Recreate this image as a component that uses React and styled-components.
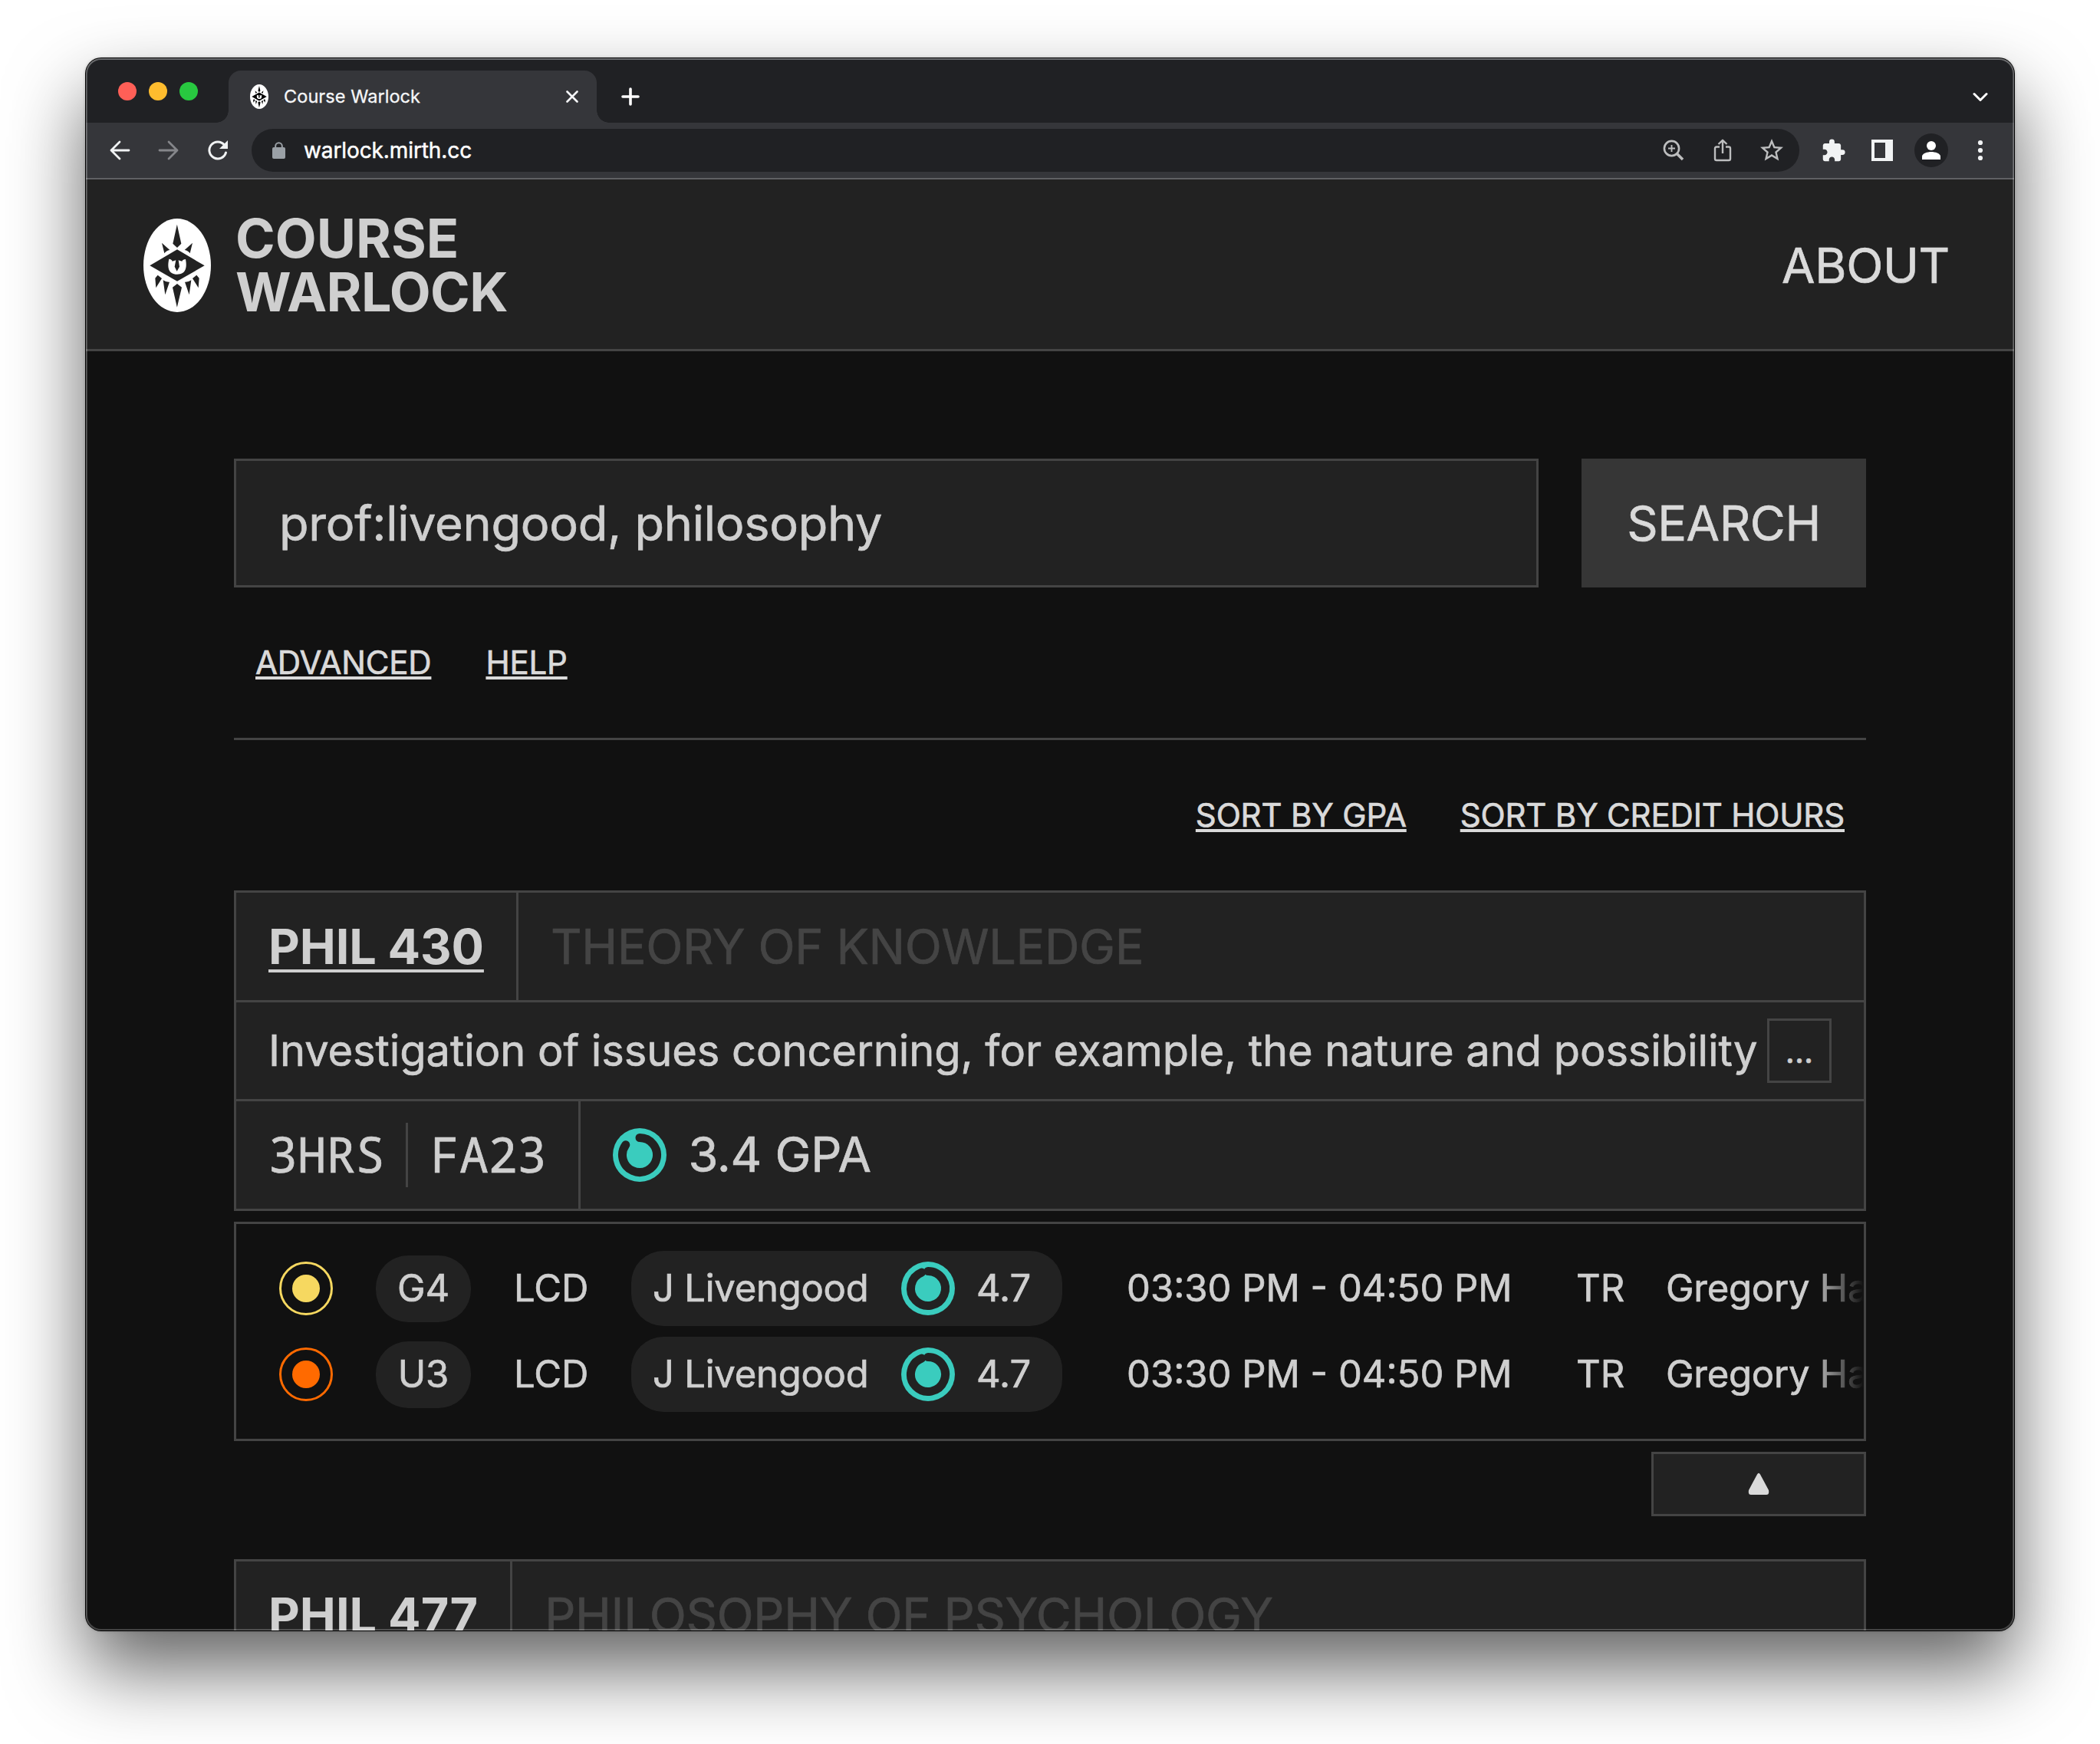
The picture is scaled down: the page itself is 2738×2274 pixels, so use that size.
import React from "react";
import styled, { createGlobalStyle } from "styled-components";
import { MdExtension, MdStarBorder } from "react-icons/md";

const Global = createGlobalStyle`
  * { box-sizing: border-box; }
  html, body { margin: 0; background: #fff; }
  body { font-family: Inter, "Liberation Sans", sans-serif; overflow: hidden; }
  svg { display: block; flex: none; }
`;

const line = "3px solid #444";

const Desktop = styled.div`
  width: 2738px;
  height: 2274px;
  padding: 76px 112px 148px;
  overflow: hidden;
  background: #fff;
`;

const Window = styled.div`
  position: relative;
  width: 2514px;
  height: 2050px;
  border-radius: 20px;
  background: #111;
  box-shadow: 0 0 0 1px #000, 0 50px 100px rgba(0, 0, 0, 0.62), 0 0 4px rgba(0, 0, 0, 0.3);
  &::after {
    content: "";
    position: absolute;
    inset: 0;
    border-radius: 20px;
    box-shadow: inset 0 0 0 2px rgba(255, 255, 255, 0.21), inset 0 1px 0 1px rgba(255, 255, 255, 0.16);
    pointer-events: none;
  }
`;

const Clip = styled.div`
  height: 100%;
  border-radius: 20px;
  overflow: hidden;
`;

const TabStrip = styled.div`
  display: flex;
  height: 84px;
  padding: 0 26px 0 42px;
  background: #202124;
`;

const Lights = styled.div`
  display: flex;
  gap: 16px;
  padding-top: 31px;
  width: 144px;
`;

const Light = styled.span`
  width: 24px;
  height: 24px;
  border-radius: 50%;
  background: ${(p) => p.$color};
`;

const Tab = styled.div`
  position: relative;
  display: flex;
  align-items: center;
  width: 480px;
  height: 68px;
  margin-top: 16px;
  padding: 0 24px 0 28px;
  border-radius: 16px 16px 0 0;
  background: #35363a;
  color: #f5f6f8;
  &::before,
  &::after {
    content: "";
    position: absolute;
    bottom: 0;
    width: 16px;
    height: 16px;
  }
  &::before {
    left: -16px;
    background: radial-gradient(circle at 0 0, transparent 15.5px, #35363a 16px);
  }
  &::after {
    right: -16px;
    background: radial-gradient(circle at 100% 0, transparent 15.5px, #35363a 16px);
  }
`;

const TabTitle = styled.span`
  flex: 1;
  margin-left: 20px;
  padding-bottom: 2px;
  font-size: 23.5px;
  letter-spacing: 0.06px;
  -webkit-text-stroke: 0.3px;
  white-space: nowrap;
`;

const NewTab = styled.div`
  margin: 38px 0 0 32px;
`;

const TabMenu = styled.div`
  margin: 44px 8px 0 auto;
`;

const Toolbar = styled.div`
  display: flex;
  align-items: center;
  height: 74px;
  padding: 0 12px;
  background: #35363a;
  border-bottom: 2px solid #5f6063;
`;

const ToolSlot = styled.div`
  display: flex;
  align-items: center;
  justify-content: center;
  width: 64px;
  height: 56px;
  color: ${(p) => p.$color || "#f1f3f4"};
`;

const Address = styled.div`
  display: flex;
  flex: 1;
  align-items: center;
  height: 56px;
  margin: 0 12px;
  padding: 0 4px 0 27px;
  border-radius: 28px;
  background: #202124;
  color: #9aa0a6;
`;

const Url = styled.span`
  flex: 1;
  margin-left: 24px;
  font-size: 28px;
  letter-spacing: -0.1px;
  -webkit-text-stroke: 0.5px;
  color: #fff;
`;

const Avatar = styled.div`
  display: flex;
  align-items: center;
  justify-content: center;
  width: 44px;
  height: 44px;
  border-radius: 50%;
  background: #202124;
`;

const Header = styled.header`
  display: flex;
  align-items: center;
  height: 224px;
  padding: 3px 84px 0 75px;
  background: #222;
  border-bottom: ${line};
`;

const Brand = styled.h1`
  flex: 1;
  margin: 0 0 0 32px;
  font-size: 70px;
  font-weight: 700;
  line-height: 70px;
  color: #cfcfcf;
`;

const BrandLine = styled.span`
  display: block;
  letter-spacing: ${(p) => p.$tracking}px;
`;

const About = styled.a`
  font-size: 63px;
  letter-spacing: -0.3px;
  -webkit-text-stroke: 0.7px;
  color: #dadada;
`;

const Main = styled.main`
  width: 2128px;
  margin: 0 auto;
  padding-top: 140px;
  color: #cfcfcf;
  -webkit-text-stroke: 0.7px;
`;

const SearchRow = styled.form`
  display: flex;
  gap: 56px;
  height: 168px;
`;

const SearchBox = styled.div`
  display: flex;
  flex: 1;
  align-items: center;
  padding-left: 56px;
  border: ${line};
  background: #222;
  font-size: 63px;
  letter-spacing: -0.27px;
`;

const SearchButton = styled.button`
  width: 371px;
  padding: 0;
  border: 0;
  background: #363636;
  color: #dadada;
  font: inherit;
  font-size: 63px;
  letter-spacing: -0.4px;
  -webkit-text-stroke: 0.7px;
`;

const Links = styled.nav`
  display: flex;
  justify-content: ${(p) => (p.$end ? "flex-end" : "flex-start")};
  align-items: center;
  gap: ${(p) => (p.$end ? 70 : 71)}px;
  height: 196px;
  padding: 0 28px;
`;

const Link = styled.a`
  font-size: 42px;
  line-height: 60px;
  letter-spacing: -0.18px;
  color: #dadada;
  text-decoration: underline;
  text-decoration-thickness: 4px;
  text-underline-offset: 3px;
  text-decoration-skip-ink: none;
`;

const Rule = styled.div`
  height: 3px;
  background: #444;
`;

const Card = styled.section`
  border: ${line};
  background: #222;
`;

const CardRow = styled.div`
  display: flex;
  align-items: center;
  height: ${(p) => p.$height || 140}px;
  box-sizing: content-box;
  border-bottom: ${(p) => (p.$last ? "0" : line)};
`;

const Cell = styled.div`
  display: flex;
  align-items: center;
  height: 100%;
  padding: 0 42px;
  border-right: ${(p) => (p.$divided ? line : "0")};
  font-size: 63px;
  white-space: nowrap;
`;

const Code = styled.a`
  font-weight: 700;
  letter-spacing: ${(p) => p.$tracking || 0}px;
  -webkit-text-stroke: 0;
  text-decoration: underline;
  text-decoration-thickness: 4px;
  text-underline-offset: 7px;
`;

const Title = styled(Cell)`
  color: #444;
  letter-spacing: -0.35px;
`;

const Description = styled.p`
  flex: 1;
  margin: 0;
  padding-left: 42px;
  font-size: 56px;
  letter-spacing: -0.07px;
  white-space: nowrap;
`;

const More = styled.button`
  width: 84px;
  height: 84px;
  margin-right: 42px;
  padding: 0;
  border: ${line};
  background: #222;
  color: #cfcfcf;
  font: inherit;
  font-size: 42px;
  -webkit-text-stroke: 0.7px;
`;

const Mono = styled.span`
  padding-bottom: 4px;
  font-family: "Noto Sans Mono", "Noto Sans Mono CJK SC", "DejaVu Sans Mono", monospace;
  font-size: 63px;
`;

const Separator = styled.span`
  width: 3px;
  height: 84px;
  margin: 0 29px 0 28px;
  background: #444;
`;

const Gpa = styled.span`
  margin-left: 28px;
  padding-bottom: 2px;
  letter-spacing: -0.25px;
`;

const Sections = styled.section`
  display: flex;
  flex-direction: column;
  gap: 14px;
  height: 286px;
  margin-top: 14px;
  padding: 35px 0 0 56px;
  border: ${line};
  overflow: hidden;
  font-size: 49px;
`;

const SectionRow = styled.div`
  display: flex;
  flex: none;
  align-items: center;
  height: 98px;
  white-space: nowrap;
  mask-image: linear-gradient(to right, #000 calc(100% - 70px), transparent);
`;

const Text = styled.span`
  flex: none;
  width: ${(p) => (p.$width ? `${p.$width}px` : "auto")};
  margin-left: ${(p) => p.$left || 0}px;
  padding-bottom: 2px;
  letter-spacing: ${(p) => p.$tracking || 0}px;
`;

const Pill = styled.span`
  display: flex;
  flex: none;
  align-items: center;
  justify-content: center;
  width: 124px;
  height: 87px;
  margin: 0 56px;
  border-radius: 42px;
  background: #222;
`;

const Professor = styled.span`
  display: flex;
  flex: none;
  align-items: center;
  width: 562px;
  height: 98px;
  padding-left: 28px;
  border-radius: 42px;
  background: #222;
`;

const CollapseRow = styled.div`
  display: flex;
  justify-content: flex-end;
  margin: 14px 0 56px;
`;

const Collapse = styled.button`
  display: flex;
  align-items: center;
  justify-content: center;
  width: 280px;
  height: 84px;
  padding: 0;
  border: ${line};
  background: #222;
`;

function Sigil({ width, height, ink }) {
  const side = "M123 140L154 168Q140 170 133 181ZM107 266L97 278L100 316L123 279ZM128 286L136 343L153 293Q139 294 128 286Z";
  return (
    <svg width={width} height={height} viewBox="51 45 264 366" preserveAspectRatio="none">
      <ellipse cx="183" cy="228" rx="132" ry="183" fill="#fff" />
      <g fill={ink}>
        <path d="M182.500 68L199 143L183 159L166 143Z" />
        <path d={side} />
        <path d={side} transform="translate(366 0) scale(-1 1)" />
        <path d="M76 229L183 166L290 229L183 290Z" />
        <path d="M183 300L201 314L182.500 392L165 314Z" />
      </g>
      <path
        fill="#fff"
        d="M151 203Q162 204 164 212L178 208L173 233L182 251L192 233L188 208L202 212Q205 204 216 204C222 235 218 263 183 263C148 263 144 235 151 203Z"
      />
    </svg>
  );
}

function Gauge({ value }) {
  const angle = value * 2 * Math.PI;
  const r = 22.5;
  const x = 35 + r * Math.sin(angle);
  const y = 35 - r * Math.cos(angle);
  return (
    <svg width="70" height="70" viewBox="0 0 70 70">
      <circle cx="35" cy="35" r="35" fill="#3accbe" />
      <path
        d={`M35 ${35 - r}A${r} ${r} 0 1 1 ${x} ${y}`}
        fill="none"
        stroke="#222"
        strokeWidth="11"
        strokeLinecap="round"
      />
    </svg>
  );
}

function Status({ color }) {
  return (
    <svg width="70" height="70" viewBox="0 0 70 70">
      <circle cx="35" cy="35" r="33.5" fill="none" stroke={color} strokeWidth="3" />
      <circle cx="35" cy="35" r="18" fill={color} />
    </svg>
  );
}

function Stroke({ w, h, d, width = 3, cap = "round" }) {
  return (
    <svg width={w} height={h} viewBox={`0 0 ${w} ${h}`} fill="none" stroke="currentColor" strokeWidth={width} strokeLinecap={cap} strokeLinejoin="round">
      <path d={d} />
    </svg>
  );
}

const sections = [
  { color: "#f6d860", code: "G4" },
  { color: "#ff6a00", code: "U3" },
];

export default function App() {
  return (
    <Desktop>
      <Global />
      <Window>
        <Clip>
          <TabStrip>
            <Lights>
              <Light $color="#ff5f57" />
              <Light $color="#febc2e" />
              <Light $color="#28c840" />
            </Lights>
            <Tab>
              <Sigil width={24} height={32} ink="#000" />
              <TabTitle>Course Warlock</TabTitle>
              <Stroke w={16} h={16} width={2.6} d="M1.500 1.500L14.500 14.500M14.500 1.500L1.500 14.500" />
            </Tab>
            <NewTab>
              <svg width="24" height="24" fill="none" stroke="#fff" strokeWidth="3.600" strokeLinecap="round">
                <path d="M12 2V22M2 12H22" />
              </svg>
            </NewTab>
            <TabMenu>
              <svg width="20" height="14" fill="none" stroke="#fff" strokeWidth="3" strokeLinecap="round" strokeLinejoin="round">
                <path d="M2 2.500L10 10.500L18 2.500" />
              </svg>
            </TabMenu>
          </TabStrip>
          <Toolbar>
            <ToolSlot>
              <Stroke w={28} h={28} width={2.8} d="M26 14H3M14 3L3 14L14 25" />
            </ToolSlot>
            <ToolSlot $color="#85868a">
              <Stroke w={28} h={28} width={2.8} d="M2 14H25M14 3L25 14L14 25" />
            </ToolSlot>
            <ToolSlot>
              <svg width="28" height="28" viewBox="0 0 28 28">
                <path d="M24.500 17A11 11 0 1 1 22.500 7" fill="none" stroke="currentColor" strokeWidth="3" strokeLinecap="round" />
                <path d="M27 1V12H16Z" fill="currentColor" />
              </svg>
            </ToolSlot>
            <Address>
              <svg width="17" height="22" fill="none">
                <rect y="7" width="17" height="15" rx="2" fill="currentColor" />
                <path d="M4.200 8V5.500A4.300 4.300 0 0 1 12.800 5.500V8" stroke="currentColor" strokeWidth="2" />
              </svg>
              <Url>warlock.mirth.cc</Url>
              <ToolSlot $color="#bdbebf">
                <svg width="28" height="28" viewBox="0 0 28 28" fill="none" stroke="currentColor">
                  <circle cx="11.500" cy="11.500" r="9.600" strokeWidth="2.600" />
                  <path d="M18.500 18.500L26 26" strokeWidth="3.600" />
                  <path d="M11.500 7V16M7 11.500H16" strokeWidth="1.900" />
                </svg>
              </ToolSlot>
              <ToolSlot $color="#bdbebf">
                <Stroke w={24} h={30} width={2.4} cap="butt" d="M8 10.500H4Q2 10.500 2 12.500V26Q2 28 4 28H20Q22 28 22 26V12.500Q22 10.500 20 10.500H16M12 19V2M6.500 7L12 1.800L17.500 7" />
              </ToolSlot>
              <ToolSlot $color="#bdbebf">
                <MdStarBorder size={36} />
              </ToolSlot>
            </Address>
            <ToolSlot>
              <MdExtension size={33} />
            </ToolSlot>
            <ToolSlot>
              <svg width="28" height="28">
                <path d="M0 0H28V28H0ZM4 4V24H18V4Z" fill="currentColor" fillRule="evenodd" />
              </svg>
            </ToolSlot>
            <ToolSlot>
              <Avatar>
                <svg width="24" height="24" fill="#fff">
                  <circle cx="12" cy="6" r="6" />
                  <path d="M0 24V20C0 16 7 14 12 14S24 16 24 20V24Z" />
                </svg>
              </Avatar>
            </ToolSlot>
            <ToolSlot>
              <svg width="8" height="28" fill="currentColor">
                <circle cx="4" cy="4" r="3.100" />
                <circle cx="4" cy="14" r="3.100" />
                <circle cx="4" cy="24" r="3.100" />
              </svg>
            </ToolSlot>
          </Toolbar>
          <Header>
            <Sigil width={88} height={122} ink="#222" />
            <Brand>
              <BrandLine $tracking={0}>COURSE</BrandLine>
              <BrandLine $tracking={-0.65}>WARLOCK</BrandLine>
            </Brand>
            <About>ABOUT</About>
          </Header>
          <Main>
            <SearchRow>
              <SearchBox>prof:livengood, philosophy</SearchBox>
              <SearchButton type="button">SEARCH</SearchButton>
            </SearchRow>
            <Links>
              <Link>ADVANCED</Link>
              <Link>HELP</Link>
            </Links>
            <Rule />
            <Links $end>
              <Link>SORT BY GPA</Link>
              <Link>SORT BY CREDIT HOURS</Link>
            </Links>
            <Card>
              <CardRow>
                <Cell $divided>
                  <Code $tracking={-0.12}>PHIL 430</Code>
                </Cell>
                <Title>THEORY OF KNOWLEDGE</Title>
              </CardRow>
              <CardRow $height={126}>
                <Description>Investigation of issues concerning, for example, the nature and possibility</Description>
                <More type="button">...</More>
              </CardRow>
              <CardRow $last>
                <Cell $divided>
                  <Mono>3HRS</Mono>
                  <Separator />
                  <Mono>FA23</Mono>
                </Cell>
                <Cell>
                  <Gauge value={0.85} />
                  <Gpa>3.4 GPA</Gpa>
                </Cell>
              </CardRow>
            </Card>
            <Sections>
              {sections.map((s) => (
                <SectionRow key={s.code}>
                  <Status color={s.color} />
                  <Pill>
                    <Text>{s.code}</Text>
                  </Pill>
                  <Text $width={153}>LCD</Text>
                  <Professor>
                    <Text $width={324} $tracking={-0.25}>
                      J Livengood
                    </Text>
                    <Gauge value={0.94} />
                    <Text $left={28}>4.7</Text>
                  </Professor>
                  <Text $left={84} $width={586}>
                    03:30 PM - 04:50 PM
                  </Text>
                  <Text $width={117}>TR</Text>
                  <Text $tracking={-0.25}>Gregory Hall</Text>
                </SectionRow>
              ))}
            </Sections>
            <CollapseRow>
              <Collapse type="button">
                <svg width="28" height="30" fill="#dadada">
                  <path d="M12 2.500Q14 -1 16 2.500L27 23Q28 29 24 29H4Q0 29 1 23Z" />
                </svg>
              </Collapse>
            </CollapseRow>
            <Card>
              <CardRow>
                <Cell $divided>
                  <Code>PHIL 477</Code>
                </Cell>
                <Title>PHILOSOPHY OF PSYCHOLOGY</Title>
              </CardRow>
            </Card>
          </Main>
        </Clip>
      </Window>
    </Desktop>
  );
}
